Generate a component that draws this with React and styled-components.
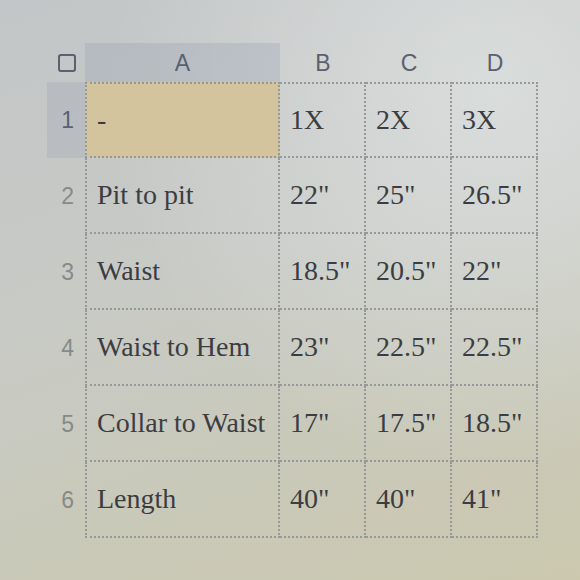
import React from "react";
import styled, { createGlobalStyle } from "styled-components";

const Global = createGlobalStyle`
  html, body { margin: 0; padding: 0; }
  body { width: 580px; height: 580px; overflow: hidden; }
`;

const Page = styled.div`
  box-sizing: border-box;
  width: 580px;
  height: 580px;
  padding: 43px 0 0 47px;
  background:
    radial-gradient(ellipse at 85% 15%, rgba(220, 224, 224, 0.85) 0%, rgba(220, 224, 224, 0) 55%),
    linear-gradient(160deg, #c2c6c8 0%, #c8cac4 45%, #cbc8ae 100%);
  font-family: "Liberation Serif", "Times New Roman", serif;
`;

const Sheet = styled.div`
  display: grid;
  grid-template-columns: 38px 195px 86px 86px 86px;
  grid-template-rows: 39px repeat(6, 76px);
`;

const Corner = styled.div`
  display: flex;
  align-items: center;
  justify-content: center;
  padding-left: 2px;
`;

const Checkbox = styled.span`
  box-sizing: border-box;
  width: 18px;
  height: 18px;
  border: 2px solid #5b616d;
  border-radius: 3px;
`;

const ColHead = styled.div`
  display: flex;
  align-items: center;
  justify-content: center;
  padding-top: 2px;
  font-family: "Liberation Sans", Arial, sans-serif;
  font-size: 23px;
  color: #5a6170;
  background: ${(p) => (p.$active ? "rgba(150, 160, 178, 0.3)" : "transparent")};
`;

const RowHead = styled.div`
  display: flex;
  align-items: center;
  justify-content: flex-end;
  padding-right: 11px;
  font-family: "Liberation Sans", Arial, sans-serif;
  font-size: 23px;
  color: ${(p) => (p.$active ? "#5a6170" : "#868a8a")};
  background: ${(p) => (p.$active ? "rgba(150, 160, 178, 0.26)" : "transparent")};
`;

const Cell = styled.div`
  box-sizing: border-box;
  display: flex;
  align-items: center;
  padding-left: 10px;
  font-size: 28px;
  color: #3b3d42;
  white-space: nowrap;
  border-right: 2px dotted #959a98;
  border-bottom: 2px dotted #959a98;
  border-left: ${(p) => (p.$first ? "2px dotted #959a98" : "none")};
  border-top: ${(p) => (p.$top ? "2px dotted #959a98" : "none")};
  background: ${(p) => (p.$selected ? "#d4c49e" : "transparent")};
`;

const cols = ["A", "B", "C", "D"];
const rows = [
  ["-", "1X", "2X", "3X"],
  ["Pit to pit", "22\"", "25\"", "26.5\""],
  ["Waist", "18.5\"", "20.5\"", "22\""],
  ["Waist to Hem", "23\"", "22.5\"", "22.5\""],
  ["Collar to Waist", "17\"", "17.5\"", "18.5\""],
  ["Length", "40\"", "40\"", "41\""],
];

export default function App() {
  return (
    <>
      <Global />
      <Page>
        <Sheet>
          <Corner>
            <Checkbox />
          </Corner>
          {cols.map((c) => (
            <ColHead key={c} $active={c === "A"}>
              {c}
            </ColHead>
          ))}
          {rows.map((r, i) => (
            <React.Fragment key={i}>
              <RowHead $active={i === 0}>{i + 1}</RowHead>
              {r.map((v, j) => (
                <Cell key={j} $first={j === 0} $top={i === 0} $selected={i === 0 && j === 0}>
                  {v}
                </Cell>
              ))}
            </React.Fragment>
          ))}
        </Sheet>
      </Page>
    </>
  );
}
